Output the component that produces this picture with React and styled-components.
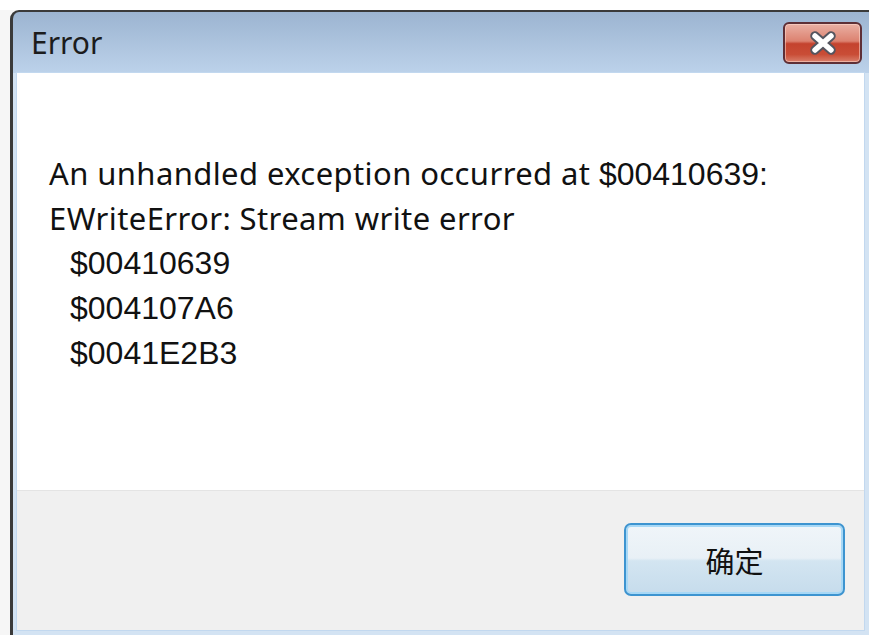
import React from 'react'
import styled, { createGlobalStyle } from 'styled-components'

const GlobalStyle = createGlobalStyle`
  html, body {
    margin: 0;
    padding: 0;
    background: #f6f6f6;
    overflow: hidden;
  }
  #root {
    height: 635px;
  }
`

const stackTrace = ['$00410639', '$004107A6', '$0041E2B3']

function App() {
  return (
    <>
      <GlobalStyle />
      <Page>
        <Window>
          <TitleBar>
            <Title>Error</Title>
            <CloseButton aria-label="close">
              <svg width="34" height="24" viewBox="0 0 34 24">
                <path d="M9 5 L25 19 M25 5 L9 19" stroke="#55555f" strokeWidth="9.5" strokeLinecap="round" />
                <path d="M9 5 L25 19 M25 5 L9 19" stroke="#ffffff" strokeWidth="5.5" strokeLinecap="round" />
              </svg>
            </CloseButton>
          </TitleBar>
          <Client>
            <Message>
              <Line>An unhandled exception occurred at <Addr>$00410639:</Addr></Line>
              <Line>EWriteError: Stream write error</Line>
              {stackTrace.map((addr) =>
                <Line key={addr} indent><Addr>{addr}</Addr></Line>
              )}
            </Message>
            <Footer>
              <OkButton>确定</OkButton>
            </Footer>
          </Client>
        </Window>
      </Page>
    </>
  )
}

export default App

const Page = styled.div`
  height: 635px;
  padding: 10px 0 0 10px;
  box-sizing: border-box;
  background: linear-gradient(#ffffff 0 10px, #f6f6f6 10px);
`

const Window = styled.div`
  height: 100%;
  box-sizing: border-box;
  display: flex;
  flex-direction: column;
  border-top: 2px solid #3a3a3a;
  border-left: 3px solid #3a3a3a;
  border-top-left-radius: 9px;
  background: linear-gradient(#9cb4d1 0, #bcd2ea 61px, #d3e3f3 61px);
  padding: 0 5px 5px 4px;
`

const TitleBar = styled.div`
  height: 61px;
  flex: none;
  display: flex;
  align-items: flex-start;
  justify-content: space-between;
  padding-left: 14px;
`

const Title = styled.div`
  font-family: "Noto Sans", "Open Sans", sans-serif;
  font-size: 30px;
  line-height: 61px;
  color: #1c1c1c;
`

const CloseButton = styled.div`
  margin-top: 10px;
  margin-right: 2px;
  width: 79px;
  height: 42px;
  box-sizing: border-box;
  border: 2px solid #5e2f36;
  border-radius: 6px;
  background: linear-gradient(#eab0a4 0%, #dc8270 45%, #c4432e 52%, #c94d36 80%, #d9806c 100%);
  box-shadow: inset 0 0 0 1px rgba(255, 220, 210, 0.55);
  display: flex;
  align-items: center;
  justify-content: center;
`

const Client = styled.div`
  flex: 1;
  display: flex;
  flex-direction: column;
  background: #ffffff;
  box-shadow: 0 0 0 1px #c2d8ef;
`

const Message = styled.div`
  flex: 1;
  padding: 78px 0 0 32px;
  color: #111111;
  font-family: "Noto Sans", "Open Sans", sans-serif;
  font-size: 31px;
  letter-spacing: 0.4px;
`

const Line = styled.div`
  line-height: 44px;
  white-space: nowrap;
  padding-left: ${props => props.indent ? '21px' : '0'};
`

const Addr = styled.span`
  font-family: "Liberation Sans", Arial, sans-serif;
  font-size: 32px;
  letter-spacing: 0;
`

const Footer = styled.div`
  height: 140px;
  flex: none;
  background: #f0f0f0;
  border-top: 1px solid #e4e4e4;
  display: flex;
  justify-content: flex-end;
  align-items: flex-start;
  padding: 32px 19px 0 0;
  box-sizing: border-box;
`

const OkButton = styled.button`
  width: 221px;
  height: 73px;
  border: 2px solid #3d94d0;
  border-radius: 7px;
  background: linear-gradient(#f0f5f9 0%, #e8f0f6 48%, #d3e5f1 52%, #c6dcec 100%);
  box-shadow: inset 0 0 0 2px #a7d8f6;
  font-family: "Noto Sans CJK SC", sans-serif;
  font-size: 29px;
  color: #111111;
  padding: 0;
`
